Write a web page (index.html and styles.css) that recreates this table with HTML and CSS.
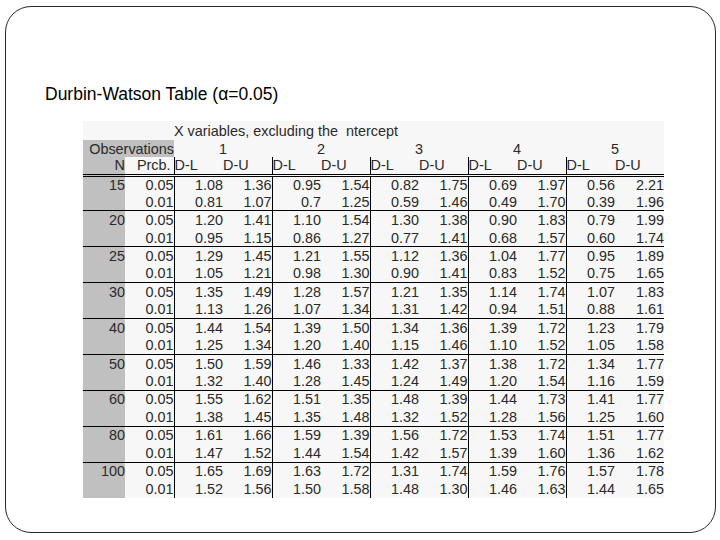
FILE: index.html
```html
<!DOCTYPE html>
<html>
<head>
<meta charset="utf-8">
<link rel="stylesheet" href="styles.css">
</head>
<body>
<div class="slide">
  <h1 class="title">Durbin-Watson Table (α=0.05)</h1>
  <table class="dw">
    <colgroup><col class="c-n"><col class="c-p"><col class="c-v" span="10"></colgroup>
    <thead>
      <tr class="hr1"><td colspan="2"></td><td colspan="10" class="xvar">X variables, excluding the&nbsp; ntercept</td></tr>
      <tr class="hr2"><td colspan="2" class="obs">Observations</td><td colspan="2" class="k">1</td><td colspan="2" class="k">2</td><td colspan="2" class="k">3</td><td colspan="2" class="k">4</td><td colspan="2" class="k">5</td></tr>
      <tr class="hr3"><td class="n">N</td><td class="p">Prcb.</td><td class="lbl dl">D-L</td><td class="lbl">D-U</td><td class="lbl dl">D-L</td><td class="lbl">D-U</td><td class="lbl dl">D-L</td><td class="lbl">D-U</td><td class="lbl dl">D-L</td><td class="lbl">D-U</td><td class="lbl dl">D-L</td><td class="lbl">D-U</td></tr>
    </thead>
    <tbody>
      <tr class="first"><td class="n">15</td><td class="p">0.05</td><td class="v dl">1.08</td><td class="v">1.36</td><td class="v dl">0.95</td><td class="v">1.54</td><td class="v dl">0.82</td><td class="v">1.75</td><td class="v dl">0.69</td><td class="v">1.97</td><td class="v dl">0.56</td><td class="v">2.21</td></tr>
      <tr><td class="n"></td><td class="p">0.01</td><td class="v dl">0.81</td><td class="v">1.07</td><td class="v dl">0.7</td><td class="v">1.25</td><td class="v dl">0.59</td><td class="v">1.46</td><td class="v dl">0.49</td><td class="v">1.70</td><td class="v dl">0.39</td><td class="v">1.96</td></tr>
      <tr class="g"><td class="n">20</td><td class="p">0.05</td><td class="v dl">1.20</td><td class="v">1.41</td><td class="v dl">1.10</td><td class="v">1.54</td><td class="v dl">1.30</td><td class="v">1.38</td><td class="v dl">0.90</td><td class="v">1.83</td><td class="v dl">0.79</td><td class="v">1.99</td></tr>
      <tr><td class="n"></td><td class="p">0.01</td><td class="v dl">0.95</td><td class="v">1.15</td><td class="v dl">0.86</td><td class="v">1.27</td><td class="v dl">0.77</td><td class="v">1.41</td><td class="v dl">0.68</td><td class="v">1.57</td><td class="v dl">0.60</td><td class="v">1.74</td></tr>
      <tr class="g"><td class="n">25</td><td class="p">0.05</td><td class="v dl">1.29</td><td class="v">1.45</td><td class="v dl">1.21</td><td class="v">1.55</td><td class="v dl">1.12</td><td class="v">1.36</td><td class="v dl">1.04</td><td class="v">1.77</td><td class="v dl">0.95</td><td class="v">1.89</td></tr>
      <tr><td class="n"></td><td class="p">0.01</td><td class="v dl">1.05</td><td class="v">1.21</td><td class="v dl">0.98</td><td class="v">1.30</td><td class="v dl">0.90</td><td class="v">1.41</td><td class="v dl">0.83</td><td class="v">1.52</td><td class="v dl">0.75</td><td class="v">1.65</td></tr>
      <tr class="g"><td class="n">30</td><td class="p">0.05</td><td class="v dl">1.35</td><td class="v">1.49</td><td class="v dl">1.28</td><td class="v">1.57</td><td class="v dl">1.21</td><td class="v">1.35</td><td class="v dl">1.14</td><td class="v">1.74</td><td class="v dl">1.07</td><td class="v">1.83</td></tr>
      <tr><td class="n"></td><td class="p">0.01</td><td class="v dl">1.13</td><td class="v">1.26</td><td class="v dl">1.07</td><td class="v">1.34</td><td class="v dl">1.31</td><td class="v">1.42</td><td class="v dl">0.94</td><td class="v">1.51</td><td class="v dl">0.88</td><td class="v">1.61</td></tr>
      <tr class="g"><td class="n">40</td><td class="p">0.05</td><td class="v dl">1.44</td><td class="v">1.54</td><td class="v dl">1.39</td><td class="v">1.50</td><td class="v dl">1.34</td><td class="v">1.36</td><td class="v dl">1.39</td><td class="v">1.72</td><td class="v dl">1.23</td><td class="v">1.79</td></tr>
      <tr><td class="n"></td><td class="p">0.01</td><td class="v dl">1.25</td><td class="v">1.34</td><td class="v dl">1.20</td><td class="v">1.40</td><td class="v dl">1.15</td><td class="v">1.46</td><td class="v dl">1.10</td><td class="v">1.52</td><td class="v dl">1.05</td><td class="v">1.58</td></tr>
      <tr class="g"><td class="n">50</td><td class="p">0.05</td><td class="v dl">1.50</td><td class="v">1.59</td><td class="v dl">1.46</td><td class="v">1.33</td><td class="v dl">1.42</td><td class="v">1.37</td><td class="v dl">1.38</td><td class="v">1.72</td><td class="v dl">1.34</td><td class="v">1.77</td></tr>
      <tr><td class="n"></td><td class="p">0.01</td><td class="v dl">1.32</td><td class="v">1.40</td><td class="v dl">1.28</td><td class="v">1.45</td><td class="v dl">1.24</td><td class="v">1.49</td><td class="v dl">1.20</td><td class="v">1.54</td><td class="v dl">1.16</td><td class="v">1.59</td></tr>
      <tr class="g"><td class="n">60</td><td class="p">0.05</td><td class="v dl">1.55</td><td class="v">1.62</td><td class="v dl">1.51</td><td class="v">1.35</td><td class="v dl">1.48</td><td class="v">1.39</td><td class="v dl">1.44</td><td class="v">1.73</td><td class="v dl">1.41</td><td class="v">1.77</td></tr>
      <tr><td class="n"></td><td class="p">0.01</td><td class="v dl">1.38</td><td class="v">1.45</td><td class="v dl">1.35</td><td class="v">1.48</td><td class="v dl">1.32</td><td class="v">1.52</td><td class="v dl">1.28</td><td class="v">1.56</td><td class="v dl">1.25</td><td class="v">1.60</td></tr>
      <tr class="g"><td class="n">80</td><td class="p">0.05</td><td class="v dl">1.61</td><td class="v">1.66</td><td class="v dl">1.59</td><td class="v">1.39</td><td class="v dl">1.56</td><td class="v">1.72</td><td class="v dl">1.53</td><td class="v">1.74</td><td class="v dl">1.51</td><td class="v">1.77</td></tr>
      <tr><td class="n"></td><td class="p">0.01</td><td class="v dl">1.47</td><td class="v">1.52</td><td class="v dl">1.44</td><td class="v">1.54</td><td class="v dl">1.42</td><td class="v">1.57</td><td class="v dl">1.39</td><td class="v">1.60</td><td class="v dl">1.36</td><td class="v">1.62</td></tr>
      <tr class="g"><td class="n">100</td><td class="p">0.05</td><td class="v dl">1.65</td><td class="v">1.69</td><td class="v dl">1.63</td><td class="v">1.72</td><td class="v dl">1.31</td><td class="v">1.74</td><td class="v dl">1.59</td><td class="v">1.76</td><td class="v dl">1.57</td><td class="v">1.78</td></tr>
      <tr><td class="n"></td><td class="p">0.01</td><td class="v dl">1.52</td><td class="v">1.56</td><td class="v dl">1.50</td><td class="v">1.58</td><td class="v dl">1.48</td><td class="v">1.30</td><td class="v dl">1.46</td><td class="v">1.63</td><td class="v dl">1.44</td><td class="v">1.65</td></tr>
    </tbody>
  </table>
</div>
</body>
</html>
```

FILE: styles.css
```css
* { box-sizing: border-box; }

body {
  margin: 0;
  background: #ffffff;
  font-family: "Liberation Sans", Arial, sans-serif;
}

.slide {
  margin: 6px 0 0 5px;
  width: 711px;
  height: 527px;
  border: 1px solid #2a2a2a;
  border-radius: 26px;
  padding-top: 77px;
}

.title {
  margin: 0 0 17px 39px;
  font-size: 17.5px;
  font-weight: normal;
  line-height: 20px;
  color: #000000;
}

.dw {
  margin-left: 77px;
  border-collapse: collapse;
  table-layout: fixed;
  width: 581px;
  background: #f7f7f7;
  font-size: 14.4px;
  color: #2a2a2a;
}

.c-n { width: 42px; }
.c-p { width: 49px; }
.c-v { width: 49px; }

.dw td {
  padding: 0;
  white-space: nowrap;
  line-height: 16px;
  height: 17.95px;
  overflow: visible;
}

.hr1 td { height: 19px; }
.hr2 td { height: 17px; }
.hr3 td {
  height: 18px;
  border-bottom: 3px double #000000;
}

.xvar {
  text-align: left;
  padding-left: 6px;
  padding-top: 3px;
}

.obs {
  background: #c0c0c0;
  text-align: right;
  padding-right: 1px;
}

.k {
  text-align: center;
  padding-right: 12px;
}

.n {
  background: #c0c0c0;
  text-align: right;
  padding-right: 3px;
}

.p {
  text-align: right;
  padding-right: 4px;
}

.hr3 .p { padding-right: 3px; }

.lbl {
  text-align: left;
  padding-left: 4px;
}

.v {
  text-align: right;
  padding-right: 6px;
}

.dl { border-left: 1px solid #000000; }

.g td { border-top: 1px solid #000000; }
```
